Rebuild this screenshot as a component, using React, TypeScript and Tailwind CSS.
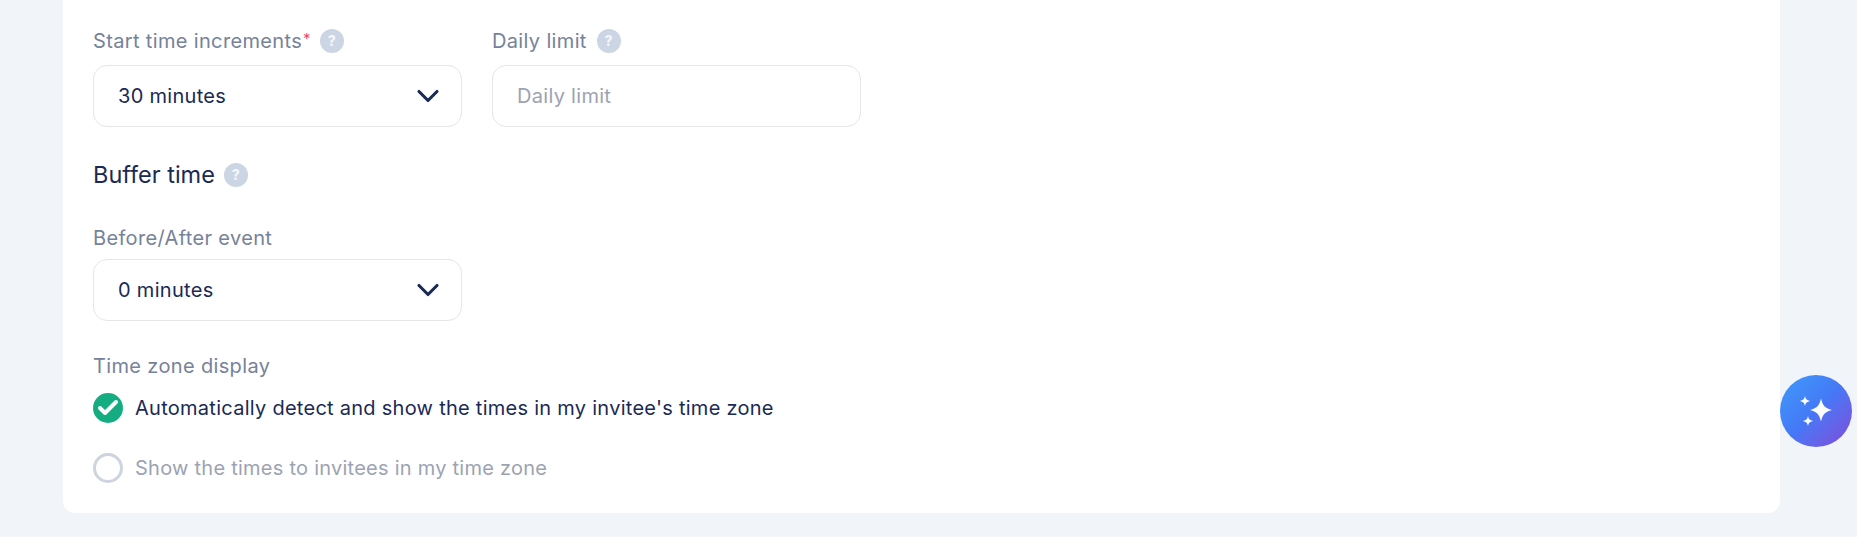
import { Check, ChevronDown } from 'lucide-react';

const font = { fontFamily: 'Inter, sans-serif' };

function HelpIcon() {
    return (
        <span className="flex h-6 w-6 shrink-0 items-center justify-center rounded-full bg-[#cbd5e3] text-[14px] font-extrabold leading-none text-[#f4f6fa]">?</span>
    );
}

function Label({ text, required, help }: { text: string; required?: boolean; help?: boolean }) {
    return (
        <div className="flex h-6 items-center text-[20px] leading-6 tracking-[0.35px] text-[#76829a]">
            <span>{text}</span>
            {required && <span className="ml-[1px] -mt-1 text-[15px] text-[#f0476e]">*</span>}
            {help && <span className={required ? 'ml-[9px]' : 'ml-[10px]'}><HelpIcon /></span>}
        </div>
    );
}

function SelectBox({ value, gap }: { value: string; gap: string }) {
    return (
        <div className={`${gap} flex h-[62px] w-[369px] items-center justify-between rounded-[14px] border border-[#e3e6ea] bg-white pl-[24px] pr-[15px] text-[20px] tracking-[0.3px] text-[#1a2a55]`}>
            <span>{value}</span>
            <ChevronDown size={36} strokeWidth={2.1} className="text-[#1a2a55]" />
        </div>
    );
}

export default function App() {
    return (
        <div className="relative h-[537px] w-full overflow-hidden bg-[#f1f4f9]" style={font}>
            <div className="ml-[63px] h-[513px] w-[1717px] rounded-b-[12px] bg-white pl-[30px] pt-[29px]">
                <div className="flex gap-[30px]">
                    <div>
                        <Label text="Start time increments" required help />
                        <SelectBox value="30 minutes" gap="mt-[12px]" />
                    </div>
                    <div>
                        <Label text="Daily limit" help />
                        <div className="mt-[12px] flex h-[62px] w-[369px] items-center rounded-[14px] border border-[#e3e6ea] bg-white pl-[24px] text-[20px] tracking-[0.3px] text-[#9ca3b2]">Daily limit</div>
                    </div>
                </div>

                <div className="mt-[36px] flex h-6 items-center text-[23.5px] text-[#1a2a55]">
                    <span>Buffer time</span>
                    <span className="ml-[9px]"><HelpIcon /></span>
                </div>

                <div className="mt-[39px]">
                    <Label text="Before/After event" />
                    <SelectBox value="0 minutes" gap="mt-[9px]" />
                </div>

                <div className="mt-[33px]">
                    <Label text="Time zone display" />
                    <div className="mt-[15px] flex h-[30px] items-center gap-[12px] text-[20px] tracking-[0.27px] text-[#1a2a55]">
                        <span className="flex h-[30px] w-[30px] items-center justify-center rounded-full bg-[#16ac82]">
                            <Check size={24} strokeWidth={4} className="text-white" />
                        </span>
                        <span>Automatically detect and show the times in my invitee's time zone</span>
                    </div>
                    <div className="mt-[30px] flex h-[30px] items-center gap-[12px] text-[20px] tracking-[0.25px] text-[#9ca3b2]">
                        <span className="h-[30px] w-[30px] rounded-full border-[3px] border-[#cdd4de]" />
                        <span>Show the times to invitees in my time zone</span>
                    </div>
                </div>
            </div>

            <div className="absolute left-[1780px] top-[375px] flex h-[72px] w-[72px] items-center justify-center rounded-full bg-gradient-to-br from-[#3f9bfb] via-[#4478f6] to-[#7a47d8]">
                <svg width="36" height="32" viewBox="0 0 36 32" fill="white">
                    <path d="M23 3.500 C24.500 10 26.500 13 34 15 C26.500 17 24.500 20 23 26.500 C21.500 20 19.500 17 12 15 C19.500 13 21.500 10 23 3.500 Z" />
                    <path d="M7 1 C7.700 4 8.500 5 12 6 C8.500 7 7.700 8 7 11 C6.300 8 5.500 7 2 6 C5.500 5 6.300 4 7 1 Z" />
                    <path d="M10 21 C10.700 24 11.500 25 15 26 C11.500 27 10.700 28 10 31 C9.300 28 8.500 27 5 26 C8.500 25 9.300 24 10 21 Z" />
                </svg>
            </div>
        </div>
    );
}
